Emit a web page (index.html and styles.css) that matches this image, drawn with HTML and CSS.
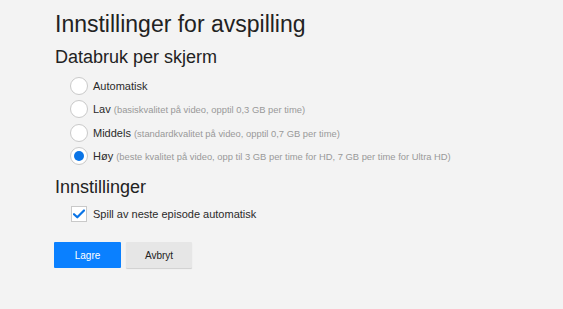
FILE: index.html
```html
<!DOCTYPE html>
<html>
<head>
<meta charset="utf-8">
<link rel="stylesheet" href="styles.css">
</head>
<body>
<div class="page">
  <h1 class="title">Innstillinger for avspilling</h1>
  <h2 class="section">Databruk per skjerm</h2>
  <div class="options">
    <div class="row"><span class="radio"></span><span class="label">Automatisk</span></div>
    <div class="row"><span class="radio"></span><span class="label">Lav <span class="hint">(basiskvalitet på video, opptil 0,3 GB per time)</span></span></div>
    <div class="row"><span class="radio"></span><span class="label">Middels <span class="hint">(standardkvalitet på video, opptil 0,7 GB per time)</span></span></div>
    <div class="row"><span class="radio checked"><span class="dot"></span></span><span class="label">Høy <span class="hint">(beste kvalitet på video, opp til 3 GB per time for HD, 7 GB per time for Ultra HD)</span></span></div>
  </div>
  <h2 class="section second">Innstillinger</h2>
  <div class="options">
    <div class="row"><span class="checkbox"><svg width="12" height="10" viewBox="0 0 12 10"><path d="M1 5.2 L4.3 8.3 L11 1.5" fill="none" stroke="#0a74e6" stroke-width="2.2" stroke-linecap="round" stroke-linejoin="round"/></svg></span><span class="label">Spill av neste episode automatisk</span></div>
  </div>
  <div class="buttons">
    <button class="btn primary">Lagre</button>
    <button class="btn secondary">Avbryt</button>
  </div>
</div>
</body>
</html>
```
FILE: styles.css
```css
html, body {
  margin: 0;
  padding: 0;
  background: #f3f3f3;
  height: 100%;
}
.page {
  padding: 10px 0 0 55px;
  font-family: "Liberation Sans", Arial, sans-serif;
  color: #222;
}
.title {
  margin: 0;
  font-size: 23px;
  font-weight: normal;
  line-height: 28px;
}
.section {
  margin: 8px 0 6px 0;
  font-size: 18px;
  font-weight: normal;
  line-height: 22px;
}
.section.second {
  margin-top: 8px;
  margin-bottom: 4.5px;
}
.options {
  padding-left: 15px;
}
.row {
  display: flex;
  align-items: center;
  height: 23.5px;
}
.radio {
  width: 18px;
  height: 18px;
  box-sizing: border-box;
  border: 1px solid #c9c9c9;
  border-radius: 50%;
  background: #fff;
  display: flex;
  align-items: center;
  justify-content: center;
  margin-right: 5px;
}
.dot {
  width: 10px;
  height: 10px;
  border-radius: 50%;
  background: #0a74e6;
}
.checkbox {
  width: 16px;
  height: 16px;
  box-sizing: border-box;
  border: 1px solid #c9c9c9;
  background: #fff;
  display: flex;
  align-items: center;
  justify-content: center;
  margin-left: 1px;
  margin-right: 6px;
}
.label {
  font-size: 11px;
  color: #2a2a2a;
}
.hint {
  font-size: 9.4px;
  color: #999;
}
.buttons {
  display: flex;
  gap: 5px;
  margin-top: 16px;
  margin-left: -1px;
}
.btn {
  font-family: "Liberation Sans", Arial, sans-serif;
  font-size: 10px;
  height: 26px;
  border: none;
  padding: 0;
  border-radius: 1px;
}
.primary {
  width: 67px;
  background: #0a80ff;
  color: #fff;
}
.secondary {
  width: 66px;
  background: #e6e6e6;
  color: #222;
  box-shadow: 0 1px 1px rgba(0,0,0,0.15);
}
```
